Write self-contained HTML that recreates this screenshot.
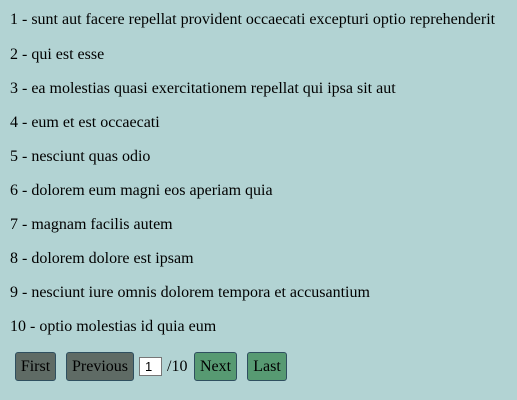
<!DOCTYPE html>
<html><head><style>
html,body{margin:0;padding:0;background:#b2d3d3;width:517px;height:400px;overflow:hidden}
body{font-family:"Liberation Serif",serif;font-size:16px;color:#000}
.l{position:absolute;left:10px;line-height:18px;white-space:nowrap}
.b{position:absolute;top:352px;height:29px;border:1px solid #2f4f5f;border-radius:3px;box-sizing:border-box;font-size:16px;line-height:28px;text-align:center}
.g{background:#5f6b65}.n{background:#579a72}
</style></head><body>
<div class="l" style="top:11px">1 - sunt aut facere repellat provident occaecati excepturi optio reprehenderit</div>
<div class="l" style="top:46px">2 - qui est esse</div>
<div class="l" style="top:80px">3 - ea molestias quasi exercitationem repellat qui ipsa sit aut</div>
<div class="l" style="top:114px">4 - eum et est occaecati</div>
<div class="l" style="top:148px">5 - nesciunt quas odio</div>
<div class="l" style="top:182px">6 - dolorem eum magni eos aperiam quia</div>
<div class="l" style="top:216px">7 - magnam facilis autem</div>
<div class="l" style="top:250px">8 - dolorem dolore est ipsam</div>
<div class="l" style="top:284px">9 - nesciunt iure omnis dolorem tempora et accusantium</div>
<div class="l" style="top:318px">10 - optio molestias id quia eum</div>
<div class="b g" style="left:15px;width:41px">First</div>
<div class="b g" style="left:66px;width:68px">Previous</div>
<div style="position:absolute;left:139px;top:357px;width:23px;height:19px;background:#fff;border:1px solid #777;box-sizing:border-box;font-family:'Liberation Sans',sans-serif;font-size:13px;line-height:17px;padding-left:5px">1</div>
<div style="position:absolute;left:167px;top:358px;line-height:18px">/10</div>
<div class="b n" style="left:194px;width:43px">Next</div>
<div class="b n" style="left:247px;width:40px">Last</div>
</body></html>
